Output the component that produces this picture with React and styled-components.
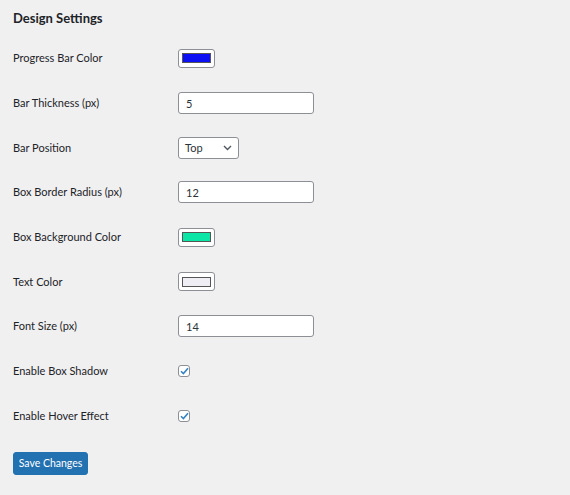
import React from 'react';
import styled, { createGlobalStyle } from 'styled-components';

const COLORS = {
  page: '#f0f0f1',
  text: '#1d2327',
  border: '#8c8f94',
  primary: '#2271b1',
  check: '#3582c4',
};

const GlobalStyle = createGlobalStyle`
  html, body {
    margin: 0;
    padding: 0;
    background: ${COLORS.page};
  }
  body {
    font-family: Lato, 'Noto Sans', sans-serif;
    color: ${COLORS.text};
  }
`;

const Page = styled.div`
  padding: 9px 13px 0;
  min-height: 495px;
  box-sizing: border-box;
`;

const Heading = styled.h2`
  margin: 0;
  font-size: 13px;
  font-weight: 700;
  line-height: 18px;
`;

const Form = styled.div`
  margin-top: 9px;
  display: flex;
  flex-direction: column;
`;

const Row = styled.div`
  display: grid;
  grid-template-columns: 165px 1fr;
  align-items: center;
  height: 44.7px;
`;

const Label = styled.div`
  font-size: 11px;
  line-height: 14px;
  font-weight: 400;
`;

const ColorSwatch = styled.div`
  width: 37px;
  height: 19px;
  box-sizing: border-box;
  border: 1px solid ${COLORS.border};
  border-radius: 3px;
  background: #fff;
  display: flex;
  align-items: center;
  justify-content: center;
  &::after {
    content: '';
    width: 29px;
    height: 10px;
    box-sizing: border-box;
    border: 1px solid #555;
    background: var(--swatch);
  }
`;

const TextInput = styled.div`
  width: 136px;
  height: 22px;
  box-sizing: border-box;
  border: 1px solid ${COLORS.border};
  border-radius: 3px;
  background: #fff;
  padding: 0 7px;
  display: flex;
  align-items: center;
  font-size: 11px;
  color: #2c3338;
`;

const Select = styled.div`
  width: 61px;
  height: 22px;
  box-sizing: border-box;
  border: 1px solid ${COLORS.border};
  border-radius: 3px;
  background: #fff;
  padding: 0 6px;
  display: flex;
  align-items: center;
  justify-content: space-between;
  font-size: 11px;
  color: #2c3338;
`;

const Checkbox = styled.div`
  width: 12px;
  height: 12px;
  box-sizing: border-box;
  border: 1px solid ${COLORS.border};
  border-radius: 3px;
  background: #fff;
  display: flex;
  align-items: center;
  justify-content: center;
`;

const Button = styled.button`
  margin-top: 14px;
  width: 75px;
  height: 23px;
  padding: 0;
  border: 1px solid ${COLORS.primary};
  border-radius: 3px;
  background: ${COLORS.primary};
  color: #fff;
  font-family: inherit;
  font-size: 10.5px;
  line-height: 1;
  cursor: pointer;
`;

const Chevron = () => (
  <svg width="9" height="6" viewBox="0 0 9 6" fill="none">
    <path d="M1 1l3.5 3.5L8 1" stroke="#50575e" strokeWidth="1.4" />
  </svg>
);

const Tick = () => (
  <svg width="9" height="8" viewBox="0 0 9 8" fill="none">
    <path d="M1 4.2l2.4 2.4L8 1.2" stroke={COLORS.check} strokeWidth="1.6" />
  </svg>
);

const fields = [
  { label: 'Progress Bar Color', type: 'color', value: '#0c10f2' },
  { label: 'Bar Thickness (px)', type: 'text', value: '5' },
  { label: 'Bar Position', type: 'select', value: 'Top' },
  { label: 'Box Border Radius (px)', type: 'text', value: '12' },
  { label: 'Box Background Color', type: 'color', value: '#0be5a5' },
  { label: 'Text Color', type: 'color', value: '#eeeef4' },
  { label: 'Font Size (px)', type: 'text', value: '14' },
  { label: 'Enable Box Shadow', type: 'check' },
  { label: 'Enable Hover Effect', type: 'check' },
];

const Control = ({ type, value }) => {
  if (type === 'color') return <ColorSwatch style={{ '--swatch': value }} />;
  if (type === 'text') return <TextInput>{value}</TextInput>;
  if (type === 'select')
    return (
      <Select>
        {value}
        <Chevron />
      </Select>
    );
  return (
    <Checkbox>
      <Tick />
    </Checkbox>
  );
};

const App = () => (
  <>
    <GlobalStyle />
    <Page>
      <Heading>Design Settings</Heading>
      <Form>
        {fields.map((f) => (
          <Row key={f.label}>
            <Label>{f.label}</Label>
            <div>
              <Control {...f} />
            </div>
          </Row>
        ))}
      </Form>
      <Button>Save Changes</Button>
    </Page>
  </>
);

export default App;
